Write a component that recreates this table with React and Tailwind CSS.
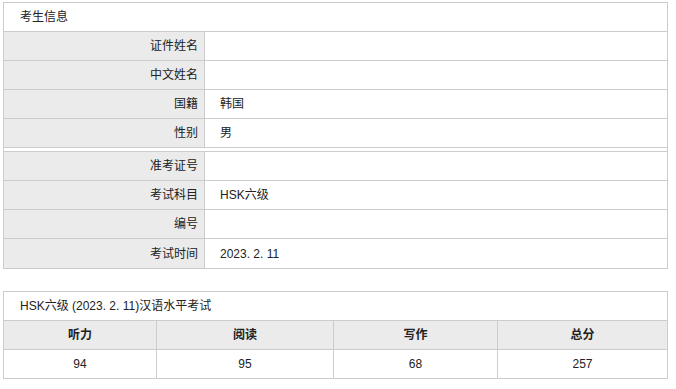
const font = { fontFamily: '"Liberation Sans", Arial, "Noto Sans CJK SC", sans-serif' };

const group1 = [
    ["证件姓名", ""],
    ["中文姓名", ""],
    ["国籍", "韩国"],
    ["性别", "男"],
];

const group2 = [
    ["准考证号", ""],
    ["考试科目", "HSK六级"],
    ["编号", ""],
    ["考试时间", "2023. 2. 11"],
];

const Row = ({ label, value, last }) => (
    <div className={`flex h-[29px] ${last ? "" : "border-b border-[#cccccc]"}`}>
        <div className="w-[201px] shrink-0 bg-[#ebebeb] border-r border-[#cccccc] flex items-center justify-end pr-[6px]">
            {label}
        </div>
        <div className="flex-1 flex items-center pl-[15px]">{value}</div>
    </div>
);

const cols = [
    ["听力", "94", "w-[153px]"],
    ["阅读", "95", "w-[177px]"],
    ["写作", "68", "w-[164px]"],
    ["总分", "257", "flex-1"],
];

export default function App() {
    return (
        <div className="bg-white w-[676px] h-[389px] pt-[2px] pl-[3px] text-[12px] text-[#222222]" style={font}>
            <div className="w-[665px] border border-[#cccccc]">
                <div className="h-[29px] border-b border-[#cccccc] flex items-center pl-[16px]">考生信息</div>
                {group1.map(([l, v]) => (
                    <Row key={l} label={l} value={v} />
                ))}
                <div className="h-[4px] border-b border-[#cccccc]" />
                {group2.map(([l, v], i) => (
                    <Row key={l} label={l} value={v} last={i === group2.length - 1} />
                ))}
            </div>

            <div className="w-[665px] mt-[22px] border border-[#cccccc]">
                <div className="h-[29px] border-b border-[#cccccc] flex items-center pl-[16px]">
                    HSK六级 (2023. 2. 11)汉语水平考试
                </div>
                <div className="flex h-[29px] border-b border-[#cccccc] bg-[#ebebeb] font-bold">
                    {cols.map(([h, , w], i) => (
                        <div
                            key={h}
                            className={`${w} flex items-center justify-center ${i < 3 ? "border-r border-[#cccccc]" : ""}`}
                        >
                            {h}
                        </div>
                    ))}
                </div>
                <div className="flex h-[28px]">
                    {cols.map(([h, v, w], i) => (
                        <div
                            key={h}
                            className={`${w} flex items-center justify-center ${i < 3 ? "border-r border-[#cccccc]" : ""}`}
                        >
                            {v}
                        </div>
                    ))}
                </div>
            </div>
        </div>
    );
}
